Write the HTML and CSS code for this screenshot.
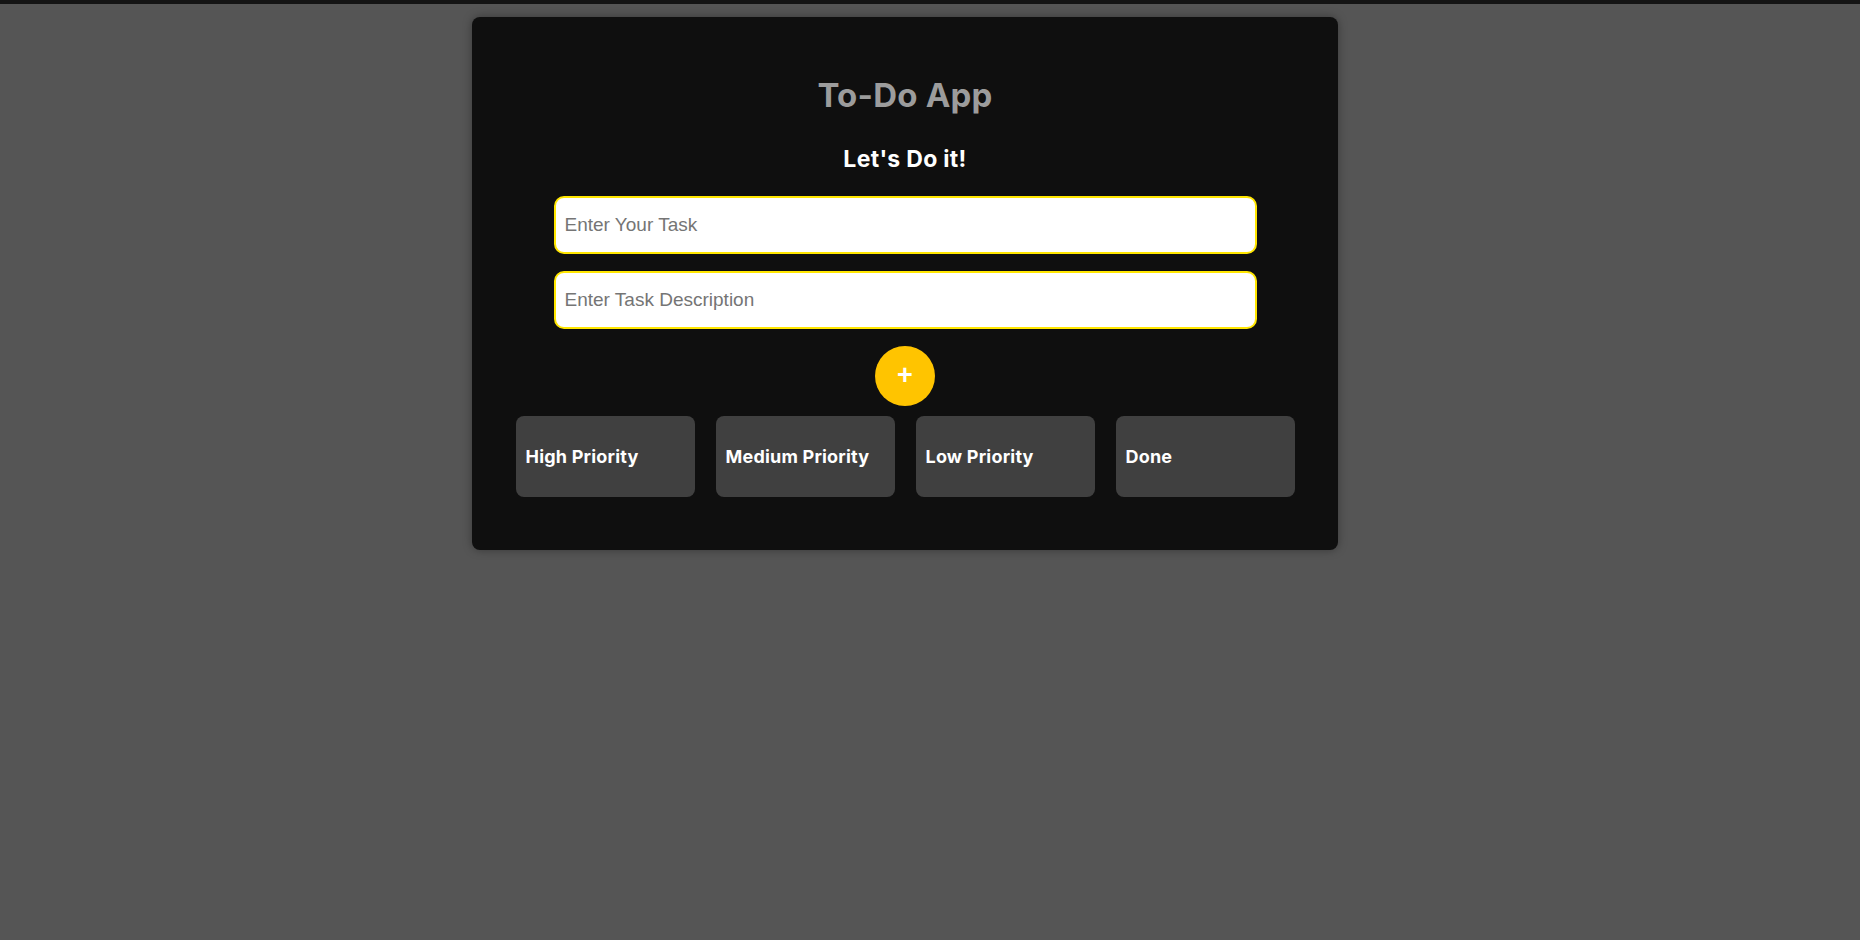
FILE: index.html
```html
<!DOCTYPE html>
<html lang="en">
<head>
<meta charset="utf-8">
<title>To-Do App</title>
<link rel="stylesheet" href="styles.css">
</head>
<body>
<div class="page">
  <main class="card">
    <h1 class="title">To-Do App</h1>
    <h2 class="subtitle">Let's Do it!</h2>
    <form class="form">
      <input class="field" type="text" placeholder="Enter Your Task">
      <input class="field" type="text" placeholder="Enter Task Description">
      <button class="add" type="button">+</button>
    </form>
    <section class="lists">
      <div class="list"><h3 class="list-title">High Priority</h3></div>
      <div class="list"><h3 class="list-title">Medium Priority</h3></div>
      <div class="list"><h3 class="list-title">Low Priority</h3></div>
      <div class="list"><h3 class="list-title">Done</h3></div>
    </section>
  </main>
</div>
</body>
</html>
```
FILE: styles.css
```css
* { box-sizing: border-box; }
html, body { margin: 0; }
body {
  background: #555555;
  border-top: 4px solid #141414;
  min-height: 100vh;
  font-family: "Inter", "Noto Sans", sans-serif;
}
.page {
  display: flex;
  justify-content: center;
  padding: 13px 50px 0 0;
}
.card {
  width: 866px;
  background: #0f0f0f;
  border-radius: 8px;
  box-shadow: 0 0 10px rgba(0, 0, 0, 0.35);
  padding: 58px 0 53px;
  display: flex;
  flex-direction: column;
  align-items: center;
}
.title {
  margin: 0;
  font-size: 33px;
  line-height: 40px;
  font-weight: 700;
  color: #9c9c9c;
  letter-spacing: 0.2px;
}
.subtitle {
  margin: 29px 0 0;
  font-size: 23px;
  line-height: 30px;
  font-weight: 700;
  color: #ffffff;
  letter-spacing: 0.3px;
}
.form {
  margin-top: 22px;
  display: flex;
  flex-direction: column;
  align-items: center;
  gap: 17px;
}
.field {
  width: 703px;
  height: 58px;
  border: 2px solid #ffe600;
  border-radius: 10px;
  background: #ffffff;
  padding: 0 9px;
  font-family: "Liberation Sans", Arial, sans-serif;
  font-size: 19px;
  color: #222;
  outline: none;
}
.field::placeholder { color: #757575; }
.add {
  width: 60px;
  height: 60px;
  border: none;
  border-radius: 50%;
  background: #ffc400;
  color: #ffffff;
  font-family: "Liberation Sans", Arial, sans-serif;
  font-weight: 700;
  font-size: 27px;
  line-height: 1;
  padding: 0 0 1px;
  cursor: pointer;
}
.lists {
  margin-top: 10px;
  display: grid;
  grid-template-columns: repeat(4, 179px);
  gap: 21px;
}
.list {
  height: 81px;
  background: #404040;
  border-radius: 8px;
  padding: 0 10px;
  display: flex;
  align-items: center;
}
.list-title {
  margin: 0;
  font-size: 18px;
  font-weight: 700;
  color: #ffffff;
  letter-spacing: 0.2px;
}
```
